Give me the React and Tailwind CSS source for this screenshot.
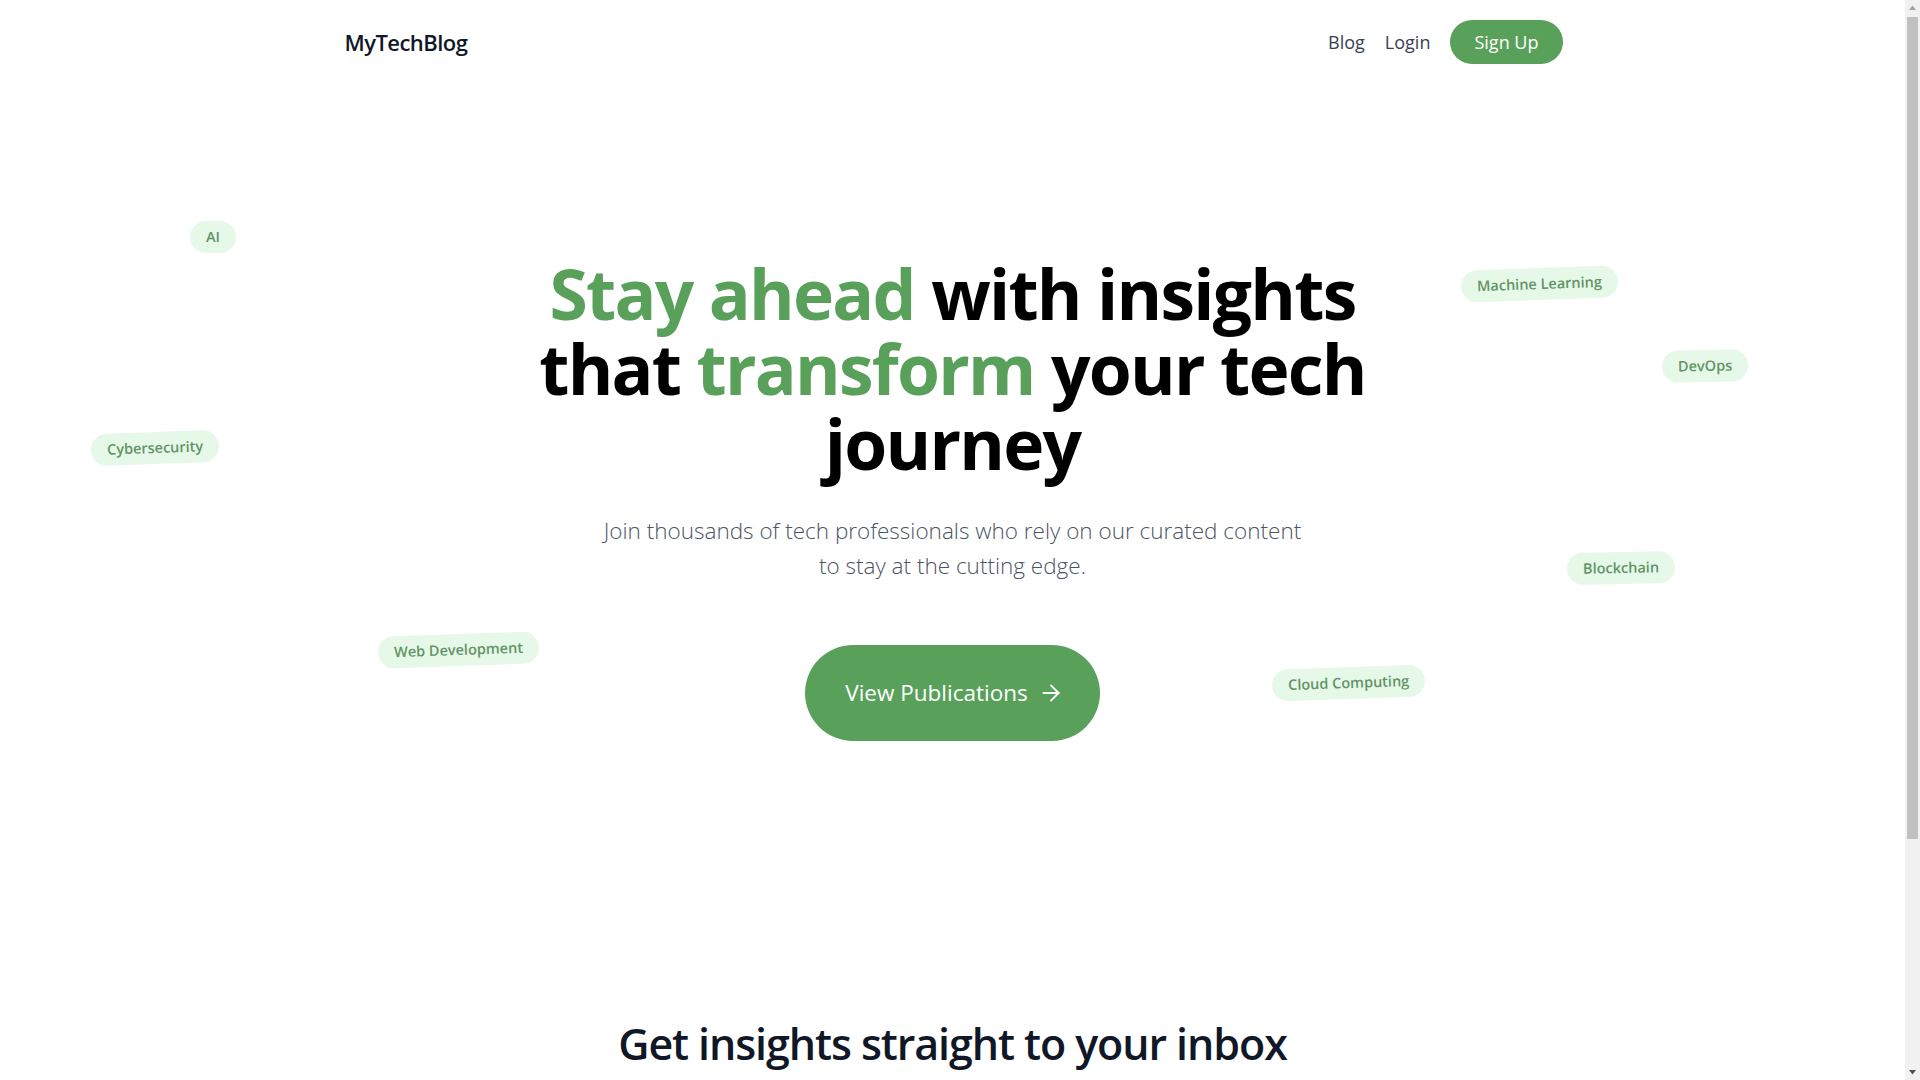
import React from "react";
import { ArrowRight } from "lucide-react";

const TAGS = [
  { label: "AI", left: 190, top: 221, rot: "rotate-0" },
  { label: "Cybersecurity", left: 91, top: 432, rot: "-rotate-2" },
  { label: "Web Development", left: 378, top: 634, rot: "-rotate-2" },
  { label: "Machine Learning", left: 1461, top: 268, rot: "-rotate-2" },
  { label: "DevOps", left: 1662, top: 350, rot: "-rotate-1" },
  { label: "Blockchain", left: 1567, top: 552, rot: "-rotate-1" },
  { label: "Cloud Computing", left: 1272, top: 667, rot: "-rotate-2" },
];

function Tag({ label, left, top, rot }) {
  return (
    <span
      className={`absolute ${rot} rounded-full bg-[#e6f8e8] px-4 py-[5px] text-[14.5px] leading-[22px] font-semibold text-[#629465] whitespace-nowrap select-none`}
      style={{ left, top }}
    >
      {label}
    </span>
  );
}

// classic browser scrollbar, the reference page is scrollable
function Scrollbar() {
  return (
    <div className="fixed right-0 top-0 h-screen w-[15px] bg-[#f1f1f1] flex flex-col items-center">
      <svg width="15" height="15" viewBox="0 0 15 15" className="shrink-0">
        <polygon points="4,10 11,10 7.5,5.5" fill="#a3a3a3" />
      </svg>
      <div className="mt-[2px] h-[822px] w-[11px] bg-[#c1c1c1]" />
      <div className="flex-1" />
      <svg width="15" height="15" viewBox="0 0 15 15" className="shrink-0">
        <polygon points="4,5 11,5 7.5,9.5" fill="#505050" />
      </svg>
    </div>
  );
}

export default function App() {
  return (
    <div className="relative min-h-screen bg-white pr-[15px] font-['Open_Sans',sans-serif] text-gray-900 overflow-x-hidden">
      {/* Nav */}
      <header className="h-[84px]">
        <div className="max-w-7xl mx-auto pl-8 pr-[30px] h-full flex items-center justify-between">
          <a href="#" className="text-[22px] font-semibold text-gray-900 tracking-tight">
            MyTechBlog
          </a>
          <nav className="flex items-center gap-5">
            <a href="#" className="text-lg text-gray-700">Blog</a>
            <a href="#" className="text-lg text-gray-700">Login</a>
            <a
              href="#"
              className="rounded-full bg-[#59a15a] px-6 py-2 text-lg text-white"
            >
              Sign Up
            </a>
          </nav>
        </div>
      </header>

      {/* Floating topics */}
      {TAGS.map((t) => (
        <Tag key={t.label} {...t} />
      ))}

      {/* Hero */}
      <section className="flex flex-col items-center text-center pt-[172px] pb-[140px]">
        <h1 className="text-[69.5px] leading-[75px] font-bold text-black tracking-tight">
          <span className="text-[#59a15a]">Stay ahead</span> with insights
          <br />
          that <span className="text-[#59a15a]">transform</span> your tech
          <br />
          journey
        </h1>
        <p className="mt-[32px] text-[22.5px] leading-[35px] font-light text-gray-600">
          Join thousands of tech professionals who rely on our curated content
          <br />
          to stay at the cutting edge.
        </p>
        <a
          href="#"
          className="mt-[62px] flex items-center gap-[10px] rounded-full bg-[#59a15a] pl-10 pr-9 py-8 text-[22.5px] leading-8 text-white"
        >
          View Publications
          <ArrowRight size={26} strokeWidth={1.75} />
        </a>
      </section>

      {/* Newsletter */}
      <section className="flex flex-col items-center text-center pt-[137px] pb-24">
        <h2 className="text-[43px] leading-[52px] font-semibold text-gray-900 tracking-tight">
          Get insights straight to your inbox
        </h2>
        <p className="mt-4 text-xl font-light text-gray-600">
          Subscribe to our newsletter for the latest articles and updates.
        </p>
        <form className="mt-8 flex gap-3">
          <input
            type="email"
            placeholder="Enter your email"
            className="w-80 rounded-full border border-gray-300 px-5 py-3 text-base"
          />
          <button type="button" className="rounded-full bg-[#59a15a] px-6 py-3 text-white">
            Subscribe
          </button>
        </form>
      </section>

      <Scrollbar />
    </div>
  );
}
